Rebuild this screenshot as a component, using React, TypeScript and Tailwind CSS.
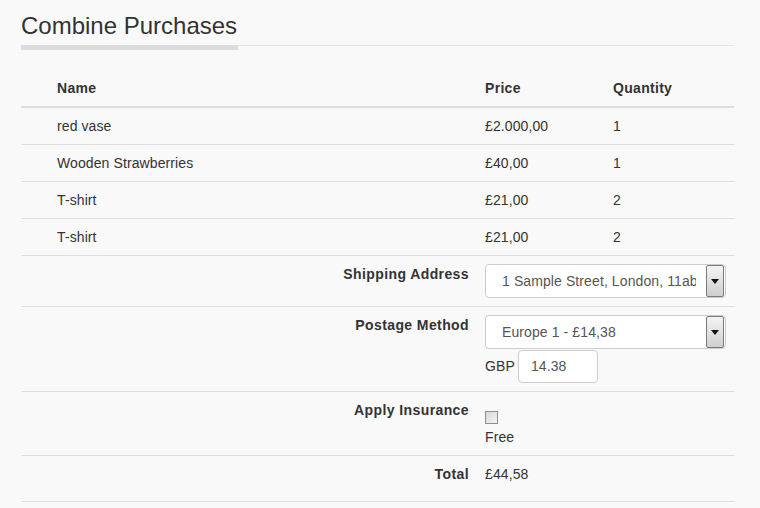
import React from "react";

const rows = [
  { name: "red vase", price: "£2.000,00", qty: "1" },
  { name: "Wooden Strawberries", price: "£40,00", qty: "1" },
  { name: "T-shirt", price: "£21,00", qty: "2" },
  { name: "T-shirt", price: "£21,00", qty: "2" },
];

function Arrow() {
  return (
    <div className="flex h-[32px] w-[18px] shrink-0 items-center justify-center rounded-[2px] border border-[#7a7a7a] bg-gradient-to-b from-[#f4f4f4] to-[#cfcfcf]">
      <svg width="8" height="5" viewBox="0 0 8 5">
        <path d="M0 0 L8 0 L4 5 Z" fill="#111" />
      </svg>
    </div>
  );
}

function Select({ value }: { value: string }) {
  return (
    <div className="flex h-[34px] w-[241px] items-center overflow-hidden rounded-[4px] border border-[#cccccc] bg-white pl-[16px] pr-[1px]">
      <div className="mr-[10px] flex-1 overflow-hidden whitespace-nowrap text-[14px] tracking-[0.1px] text-[#555555]">{value}</div>
      <Arrow />
    </div>
  );
}

function LabelRow({ label, children, h }: { label: string; children: React.ReactNode; h: string }) {
  return (
    <div className={`flex border-b border-[#dddddd] ${h}`}>
      <div className="w-[456px] shrink-0 pr-[8px] pt-[8px] text-right text-[14px] font-bold leading-[20px] tracking-[0.4px] text-[#333333]">
        {label}
      </div>
      <div className="flex-1 pl-[8px] pt-[8px] tracking-[0.1px]">{children}</div>
    </div>
  );
}

export default function App() {
  return (
    <div
      className="min-h-[508px] w-[760px] bg-[#f9f9f9] text-[#333333]"
      style={{ fontFamily: '"Liberation Sans", Arial, sans-serif' }}
    >
      <div className="ml-[21px] w-[713px]">
        <div className="pt-[9px] text-[24px] leading-[34px] text-[#333333]">Combine Purchases</div>
        <div className="mt-[2px] flex">
          <div className="h-[5px] w-[217px] bg-[#dddddd]" />
          <div className="h-px flex-1 bg-[#e5e5e5]" />
        </div>

        <div className="mt-[20px]">
          <div className="flex h-[38px] border-b-2 border-[#dddddd] text-[14px] font-bold leading-[20px] tracking-[0.3px]">
            <div className="w-[456px] pl-[36px] pt-[8px]">Name</div>
            <div className="w-[128px] pl-[8px] pt-[8px]">Price</div>
            <div className="flex-1 pl-[8px] pt-[8px]">Quantity</div>
          </div>
          {rows.map((r, i) => (
            <div key={i} className="flex h-[37px] border-b border-[#dddddd] text-[14px] leading-[20px] tracking-[0.1px]">
              <div className="w-[456px] pl-[36px] pt-[8px]">{r.name}</div>
              <div className="w-[128px] pl-[8px] pt-[8px]">{r.price}</div>
              <div className="flex-1 pl-[8px] pt-[8px]">{r.qty}</div>
            </div>
          ))}

          <LabelRow label="Shipping Address" h="h-[51px]">
            <Select value="1 Sample Street, London, 11ab" />
          </LabelRow>

          <LabelRow label="Postage Method" h="h-[85px]">
            <Select value="Europe 1 - £14,38" />
            <div className="mt-[1px] flex items-center gap-[3px]">
              <span className="text-[14px]">GBP</span>
              <div className="flex h-[33px] w-[80px] items-center rounded-[4px] border border-[#cccccc] bg-white pl-[12px] text-[14px] text-[#555555]">
                14.38
              </div>
            </div>
          </LabelRow>

          <LabelRow label="Apply Insurance" h="h-[64px]">
            <div className="h-[27px] pt-[11px]">
              <div className="h-[13px] w-[13px] border border-[#8f8f8f] bg-gradient-to-br from-[#d8d8d8] to-[#f4f4f4]" />
            </div>
            <div className="text-[14px] leading-[20px]">Free</div>
          </LabelRow>

          <LabelRow label="Total" h="h-[46px]">
            <div className="text-[14px] leading-[20px]">£44,58</div>
          </LabelRow>
        </div>
      </div>
    </div>
  );
}
